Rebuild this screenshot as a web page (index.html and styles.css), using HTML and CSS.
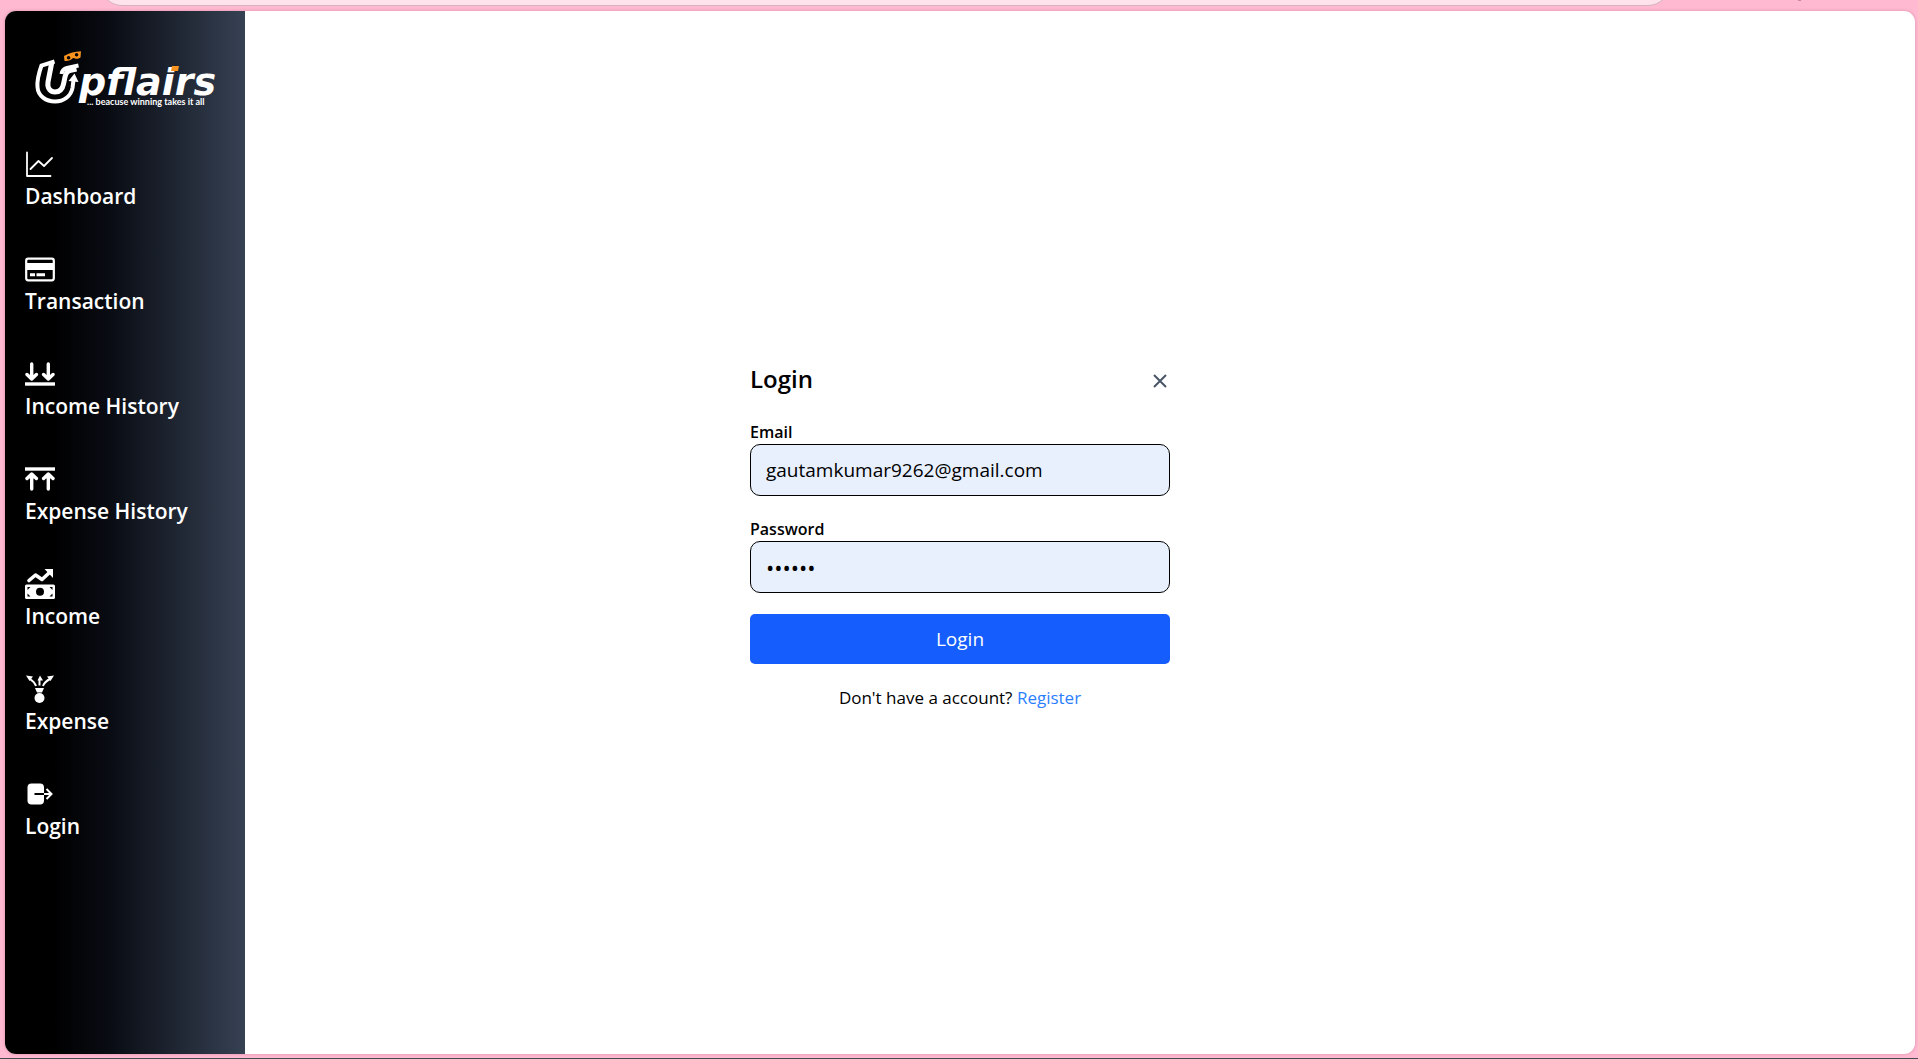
FILE: index.html
```html
<!DOCTYPE html>
<html lang="en">
<head>
<meta charset="utf-8">
<meta name="viewport" content="width=device-width, initial-scale=1">
<title>Upflairs - Login</title>
<link rel="stylesheet" href="styles.css">
</head>
<body>
<div class="toolbar"><div class="address"></div><span class="speck"></span></div>
<div class="window">
  <aside class="sidebar">
    <a class="logo" href="#" aria-label="Upflairs home">
      <svg width="190" height="60" viewBox="30 48 190 60">
        <g fill="none" stroke="#fff" stroke-linejoin="miter">
          <path stroke-width="4" d="M54.500 61.500 41.500 65.500C38.500 74 37 82 37.500 87C38 96 46 101.500 55 101.500C64 101.500 71 96 72.500 88L73.500 80"/>
          <path stroke-width="5" d="M52 61.500 48 82C47 89 51 92 55 92C60 92 62.500 89 63.500 84L65 77C66 72 68 70.500 72 70L76.500 69"/>
          <path stroke-width="4" d="M78.500 65.500 67 68C63.500 69 62 71 61.500 74"/>
        </g>
        <path fill="#fff" d="M68.500 81 74.500 73.500 78.500 82Z"/>
        <path fill="#f7931e" fill-rule="evenodd" d="M64 56Q72 51.500 81 51.200L80.500 57.500C77 60 75 58 73 58C71 60 68 61.500 64.500 61ZM66.800 57.800a1.800 1.800 0 1 0 3.600 0a1.800 1.800 0 1 0 -3.600 0ZM74.800 54.800a1.800 1.800 0 1 0 3.600 0a1.800 1.800 0 1 0 -3.600 0Z"/>
        <text class="logo-name" x="79" y="95">pflairs</text>
        <path fill="#f7931e" d="M172 66h7l-1 5h-7z"/>
        <text class="logo-tag" x="87" y="105">... beacuse winning takes it all</text>
      </svg>
    </a>
    <nav class="nav">
      <a class="item" href="#"><svg class="icon" viewBox="0 0 30 30" fill="none" stroke="#fff" stroke-width="1.800" stroke-linecap="round" stroke-linejoin="round"><path d="M2 3.500V27H25.500M5.500 20 13.500 12 19 17 27 9"/></svg>Dashboard</a>
      <a class="item" href="#"><svg class="icon" viewBox="0 0 30 30"><rect x="1.200" y="4.700" width="27.600" height="21.600" rx="2" fill="none" stroke="#fff" stroke-width="2.200"/><path fill="#fff" d="M1 9h28v7H1zM5 19.200h5v3H5zM11.500 19.200h8.500v3h-8.500z"/></svg>Transaction</a>
      <a class="item" href="#"><svg class="icon" viewBox="0 0 30 30" fill="none" stroke="#fff" stroke-width="3.400" stroke-linecap="round" stroke-linejoin="round"><path d="M6.700 5V19.500M2 15.500 6.700 20 11.400 15.500M23.300 5V19.500M18.600 15.500 23.300 20 28 15.500"/><path stroke-linecap="butt" d="M0 25H30"/></svg>Income History</a>
      <a class="item" href="#"><svg class="icon" viewBox="0 0 30 30" fill="none" stroke="#fff" stroke-width="3.400" stroke-linecap="round" stroke-linejoin="round"><path d="M6.700 25V10.500M2 14.500 6.700 10 11.400 14.500M23.300 25V10.500M18.600 14.500 23.300 10 28 14.500"/><path stroke-linecap="butt" d="M0 5H30"/></svg>Expense History</a>
      <a class="item" href="#"><svg class="icon" viewBox="0 0 30 30"><path fill="none" stroke="#fff" stroke-width="3.600" stroke-linecap="round" stroke-linejoin="round" d="M4 11.500 10.500 6 17 10.500 24 4"/><path fill="#fff" fill-rule="evenodd" d="M19.500 0H28V9ZM1.500 15.500H28.500Q30 15.500 30 17V28.500Q30 30 28.500 30H1.500Q0 30 0 28.500V17Q0 15.500 1.500 15.500ZM11 22.700a4 4 0 1 0 8 0a4 4 0 1 0 -8 0ZM2.500 18V21L5.500 18ZM27.500 18V21L24.500 18ZM2.500 27.500V24.500L5.500 27.500ZM27.500 27.500V24.500L24.500 27.500Z"/></svg>Income</a>
      <a class="item" href="#"><svg class="icon" viewBox="0 0 30 30"><path fill="none" stroke="#fff" stroke-width="2" d="M5 5C8 7 10 9 11 12M25 5C21 7 19 9 18 12M14.500 5V11.500"/><path fill="#fff" d="M1 1.500 8 2.500 4.500 7ZM29 1.500 22 2.500 25.500 7ZM15 1.500 18 6.500H12.500ZM10 14H19L17 18.500H12Z"/><circle cx="14.500" cy="24" r="5" fill="#fff"/></svg>Expense</a>
      <a class="item" href="#"><svg class="icon" viewBox="0 0 30 30"><rect x="2.500" y="4.500" width="16.500" height="21" rx="4" fill="#fff"/><path d="M9.500 15H19" stroke="#000" stroke-width="2"/><path d="M19 15H26M21.500 10 26.500 15 21.500 20" fill="none" stroke="#fff" stroke-width="2"/></svg>Login</a>
    </nav>
  </aside>
  <main class="content">
    <form class="login">
      <header class="login-head">
        <h1>Login</h1>
        <button class="close" type="button" aria-label="Close"><svg width="14" height="14" viewBox="0 0 14 14"><path d="M1 1 13 13M13 1 1 13" stroke="#4a5565" stroke-width="2"/></svg></button>
      </header>
      <div class="field"><label for="email">Email</label><input id="email" type="email" value="gautamkumar9262@gmail.com"></div>
      <div class="field"><label for="password">Password</label><input id="password" type="password" value="secret"></div>
      <button class="submit" type="submit">Login</button>
      <p class="note">Don't have a account? <a href="#">Register</a></p>
    </form>
  </main>
</div>
</body>
</html>
```
FILE: styles.css
```css
* { box-sizing: border-box; }
body {
  margin: 0;
  min-height: 100vh;
  display: flex;
  flex-direction: column;
  background: #ffb9d0;
  border-bottom: 1px solid #444a50;
  font-family: "Open Sans", "Noto Sans", sans-serif;
  color: #000;
}
.toolbar { height: 11px; display: flex; padding: 0 117px 0 100px; overflow: hidden; }
.address {
  flex: 1;
  height: 46px;
  margin: -40px 128px 0 0;
  background: #ffe3ec;
  border: 1px solid #d3b4c0;
  border-radius: 22px;
}
.speck { width: 3px; height: 1px; background: #c88ca0; }
.window {
  flex: 1;
  display: grid;
  grid-template-columns: 240px 1fr;
  margin: 0 3px 4px 5px;
  background: #fff;
  border-radius: 11px;
  overflow: hidden;
  box-shadow: 0 0 3px #b0607c80;
}
.sidebar {
  grid-area: 1 / 1;
  padding: 37px 20px;
  background: linear-gradient(90deg, #000 20%, #090c13 44%, #364153 100%);
}
.logo { display: block; width: 190px; height: 60px; margin: 0 -10px 41px 5px; }
.logo svg { display: block; }
.logo-name { font: italic bold 38px "DejaVu Sans", sans-serif; fill: #fff; }
.logo-tag { font: bold 9px Lato, sans-serif; fill: #fff; }
.nav { display: flex; flex-direction: column; gap: 40px; }
.item {
  display: flex;
  flex-direction: column;
  font-size: 21px;
  line-height: 35px;
  font-weight: 600;
  color: #fff;
  text-decoration: none;
}
.icon { width: 30px; height: 30px; }
.content {
  grid-area: 1 / 1 / 2 / 3;
  display: grid;
  place-items: center;
  padding-top: 8px;
  pointer-events: none;
}
.login { width: 420px; pointer-events: auto; display: flex; flex-direction: column; }
.login-head { display: flex; justify-content: space-between; align-items: center; margin-bottom: 24px; }
h1 { margin: 0; font-size: 24px; line-height: 34px; font-weight: 600; }
.close { display: flex; margin: 4px 3px 0 0; padding: 0; border: 0; background: none; }
.field { display: flex; flex-direction: column; margin-bottom: 21px; }
label { font-size: 16px; line-height: 24px; font-weight: 600; }
input {
  height: 52px;
  padding: 0 15px;
  border: 1px solid #000;
  border-radius: 10px;
  background: #e8f0fe;
  font: 19px "Open Sans", sans-serif;
  color: #000;
}
input[type="password"] { font-size: 22px; }
.submit {
  height: 50px;
  border: 0;
  border-radius: 5px;
  background: #155dfc;
  color: #fff;
  font: 19px "Open Sans", sans-serif;
}
.note { margin: 20px 0 0; text-align: center; font-size: 17px; line-height: 28px; }
.note a { color: #2b7fff; text-decoration: none; }
```
